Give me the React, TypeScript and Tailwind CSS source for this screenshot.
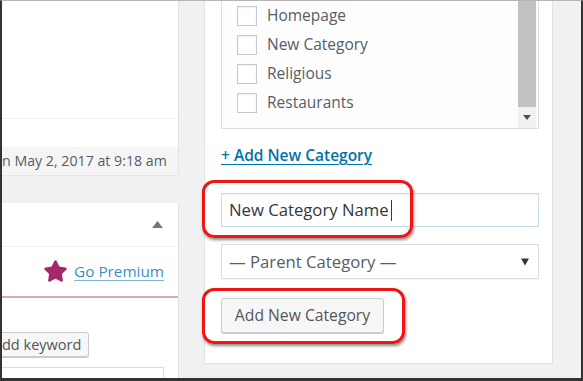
import { Star } from "lucide-react";

const CATS = ["Homepage", "New Category", "Religious", "Restaurants"];

const font = { fontFamily: '"Open Sans", "Noto Sans", sans-serif' };

function CategoryBox() {
  return (
    <div className="flex h-[128px] shrink-0 border border-t-0 border-[#dddddd] bg-[#fdfdfd]">
      <div className="flex-1">
        {CATS.map((c) => (
          <div key={c} className="flex h-[29px] items-center pl-[15px]">
            <span className="h-[20px] w-[20px] border border-[#c5c8cc] bg-white shadow-[inset_0_1px_2px_rgba(0,0,0,0.07)]" />
            <span className="ml-[10px] text-[15.5px] text-[#555d66]">{c}</span>
          </div>
        ))}
      </div>
      {/* scrollbar */}
      <div className="mr-[2px] flex w-[18px] flex-col bg-[#f1f1f1]">
        <div className="h-[106px] bg-[#c1c1c1]" />
        <div className="flex flex-1 items-center justify-center">
          <svg width="8" height="5" viewBox="0 0 8 5">
            <path d="M0 0h8L4 5z" fill="#505050" />
          </svg>
        </div>
      </div>
    </div>
  );
}

export default function App() {
  return (
    <div
      className="relative flex h-[381px] w-[583px] overflow-hidden border-t border-l-2 border-r-2 border-b-[3px] border-t-[#b5b5b5] border-l-[#333] border-r-[#333] border-b-[#333] bg-[#f1f1f1]"
      style={font}
    >
      {/* left column */}
      <div className="flex w-[177px] shrink-0 flex-col">
        <div className="flex h-[174px] shrink-0 flex-col border-r border-[#e2e2e2] bg-white shadow-[0_1px_1px_rgba(0,0,0,0.04)]">
          <div className="h-[118px] border-b border-[#eeeeee]" />
          <div className="h-[28px]" />
          <div className="flex flex-1 items-center bg-[#f5f5f5] text-[14.2px] text-[#555d66] whitespace-nowrap">
            n May 2, 2017 at 9:18 am
          </div>
        </div>
        <div className="mt-[28px] flex min-h-0 flex-1 flex-col overflow-hidden border-r border-[#e2e2e2] bg-white">
          <div className="flex h-[44px] shrink-0 items-center justify-end border-b border-[#eeeeee] pr-[15px]">
            <svg width="11" height="7" viewBox="0 0 11 7">
              <path d="M0 7h11L5.5 0z" fill="#72777c" />
            </svg>
          </div>
          <div className="flex h-[51px] shrink-0 items-center justify-end gap-[6px] border-b-2 border-[#dca5c4] pr-[14px]">
            <Star className="h-[25px] w-[25px]" fill="#a4286a" stroke="#a4286a" strokeWidth={1.5} />
            <span className="text-[15.3px] text-[#3a8fc4] underline decoration-[#7fb3d8] underline-offset-[3px]">
              Go Premium
            </span>
          </div>
          <div className="mt-[34px] flex h-[25px] w-[87px] shrink-0 items-center rounded-r-[3px] border border-l-0 border-[#cccccc] bg-[#f7f7f7] text-[14.5px] text-[#555555] shadow-[0_1px_0_#cccccc] whitespace-nowrap">
            dd keyword
          </div>
          <div className="mt-[10px] h-[20px] w-[162px] shrink-0 border border-l-0 border-[#dddddd]" />
        </div>
      </div>

      {/* right panel */}
      <div className="ml-[25px] flex h-[363px] w-[349px] shrink-0 flex-col border-r border-b border-l border-[#e2e2e2] bg-white pr-[13px] pl-[16px]">
        <CategoryBox />
        <div className="mt-[16px] text-[15.5px] leading-[20px]">
          <span className="font-semibold text-[#0073aa] underline underline-offset-[3px]">+ Add New Category</span>
        </div>
        <div className="mt-[28px] flex h-[34px] items-center border border-[#c9dcea] px-[7px] text-[16.7px] text-[#32373c] shadow-[inset_0_1px_2px_rgba(0,0,0,0.07)]">
          New Category Name<span className="ml-[2px] h-[21px] w-px bg-[#32373c]" />
        </div>
        <div className="mt-[17px] flex h-[35px] items-center justify-between border border-[#dddddd] pr-[9px] pl-[7px] text-[16.7px] text-[#555d66] shadow-[0_1px_1px_rgba(0,0,0,0.04)]">
          <span>— Parent Category —</span>
          <svg width="8" height="8" viewBox="0 0 8 8">
            <path d="M0 0.5h8L4 7.5z" fill="#32373c" />
          </svg>
        </div>
        <div className="mt-[19px] flex h-[35px] w-[163px] items-center justify-center rounded-[3px] border border-[#cccccc] bg-[#f7f7f7] text-[15.7px] text-[#555555] shadow-[0_1px_0_#cccccc]">
          Add New Category
        </div>
      </div>

      {/* red highlight boxes */}
      <div className="pointer-events-none absolute top-[179px] left-[200px] h-[58px] w-[211px] rounded-[12px] border-[3px] border-[#f01515] shadow-[1px_2px_3px_rgba(0,0,0,0.45)]" />
      <div className="pointer-events-none absolute top-[287px] left-[200px] h-[56px] w-[203px] rounded-[12px] border-[3px] border-[#f01515] shadow-[1px_2px_3px_rgba(0,0,0,0.45)]" />
    </div>
  );
}
